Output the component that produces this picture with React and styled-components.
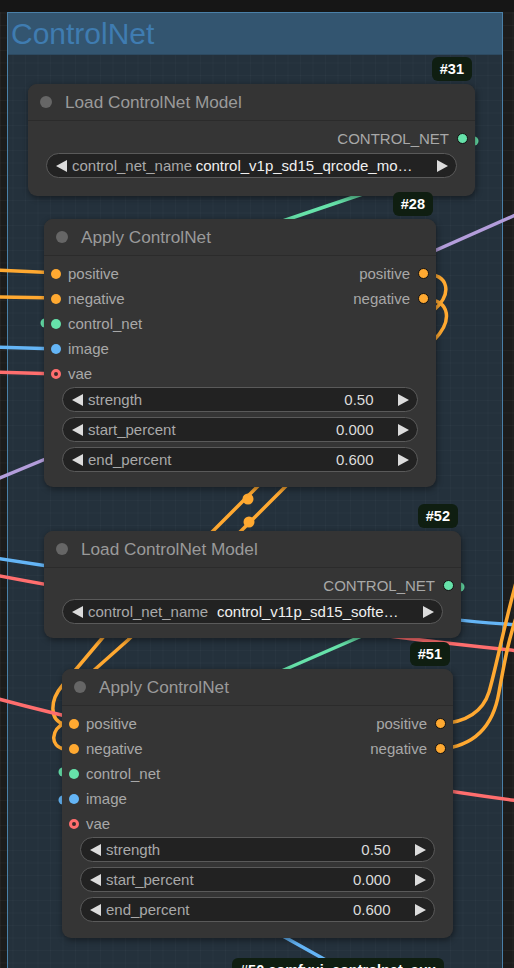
import React from "react";
import styled, { createGlobalStyle } from "styled-components";

const GlobalStyle = createGlobalStyle`
  html, body { margin: 0; padding: 0; background: #1b1b1b; }
  body { font-family: "Liberation Sans", Arial, sans-serif; }
  * { box-sizing: border-box; }
`;

const COLORS = {
  CONDITIONING: "#ffa931",
  CONTROL_NET: "#66e2aa",
  IMAGE: "#64b5f6",
  VAE: "#ff6e6e",
  LATENT: "#b39ddb",
};

const Canvas = styled.div`
  position: relative;
  width: 514px;
  height: 968px;
  overflow: hidden;
  background-color: #1c1c1c;
  background-image: linear-gradient(#161616, #161616),
    linear-gradient(rgba(255, 255, 255, 0.03) 1px, transparent 1px),
    linear-gradient(90deg, rgba(255, 255, 255, 0.03) 1px, transparent 1px);
  background-size: 100% 12px, 12.5px 12.5px, 12.5px 12.5px;
  background-repeat: no-repeat, repeat, repeat;
`;

const Group = styled.section`
  position: absolute;
  left: 7px;
  top: 12px;
  width: 496px;
  height: 1000px;
  border: 1px solid #4a80a8;
  background: rgba(51, 85, 112, 0.38);
`;

const GroupTitle = styled.h1`
  margin: 0;
  height: 42px;
  padding-left: 3px;
  background: #335570;
  border-bottom: 1px solid #2d4a61;
  color: #3f7cb1;
  font-family: "Liberation Sans", Arial, sans-serif;
  font-weight: 400;
  font-size: 30px;
  line-height: 41px;
`;

const Wires = styled.svg`
  position: absolute;
  left: 0;
  top: 0;
  width: 514px;
  height: 968px;
`;

const NodeBox = styled.div`
  position: absolute;
  background: #353535;
  border-radius: 9px;
  box-shadow: 1px 2px 6px rgba(0, 0, 0, 0.45);
  font-family: "Liberation Sans", Arial, sans-serif;
`;

const TitleBar = styled.div`
  height: 37px;
  display: flex;
  align-items: center;
  gap: 13px;
  padding-left: 12px;
  border-bottom: 1px solid #2b2b2b;
  border-radius: 9px 9px 0 0;
  background: #343434;
`;

const TitleDot = styled.span`
  width: 12px;
  height: 12px;
  border-radius: 50%;
  background: #666;
  flex: none;
`;

const TitleText = styled.span`
  color: #9a9a9a;
  font-size: 17.2px;
  white-space: nowrap;
`;

const Badge = styled.div`
  position: absolute;
  right: 3px;
  bottom: calc(100% + 3px);
  height: 24px;
  padding: 0 8px;
  border-radius: 6px;
  background: #0f1e11;
  color: #fff;
  font-family: "Liberation Sans", Arial, sans-serif;
  font-weight: 700;
  font-size: 14.5px;
  line-height: 24px;
  white-space: nowrap;
`;

const FreeBadge = styled(Badge)`
  right: auto;
  bottom: auto;
`;

const Body = styled.div`
  padding-top: 5px;
  display: flex;
  flex-direction: column;
`;

const PairRow = styled.div`
  height: 25px;
  display: flex;
  align-items: center;
  justify-content: space-between;
`;

const SlotRow = styled.div`
  height: 25px;
  display: flex;
  align-items: center;
  justify-content: ${(p) => (p.$out ? "flex-end" : "flex-start")};
  gap: ${(p) => (p.$out ? "8px" : "7px")};
  padding: ${(p) => (p.$out ? "0 7px 0 0" : "0 0 0 7px")};
`;

const SlotDot = styled.span`
  width: ${(p) => (p.$out ? "11px" : "10px")};
  height: ${(p) => (p.$out ? "11px" : "10px")};
  border-radius: 50%;
  flex: none;
  background: ${(p) => (p.$hollow ? "#3a2a2a" : p.$color)};
  border: ${(p) =>
    p.$out ? "1px solid #111" : p.$hollow ? `3px solid ${p.$color}` : "none"};
`;

const SlotLabel = styled.span`
  color: #a8a8a8;
  font-size: 15px;
  white-space: nowrap;
`;

const WidgetList = styled.div`
  display: flex;
  flex-direction: column;
  gap: 5px;
  padding: 0 18px;
  margin-top: ${(p) => p.$top}px;
`;

const Widget = styled.div`
  height: 25px;
  display: flex;
  align-items: center;
  padding: 0 8px 0 8.5px;
  border: 1px solid #5a5a5a;
  border-radius: 13px;
  background: #222;
  font-size: 15px;
  overflow: hidden;
`;

const Arrow = styled.span`
  width: 0;
  height: 0;
  flex: none;
  border-top: 6.5px solid transparent;
  border-bottom: 6.5px solid transparent;
  ${(p) =>
    p.$right
      ? "border-left: 11px solid #dcdcdc;"
      : "border-right: 11px solid #dcdcdc;"}
`;

const WLabel = styled.span`
  margin-left: 5.5px;
  color: #a9a9a9;
  white-space: nowrap;
`;

const WValue = styled.span`
  margin-left: auto;
  margin-right: 24.5px;
  color: ${(p) => (p.$combo ? "#f0f0f0" : "#dcdcdc")};
  white-space: nowrap;
  overflow: hidden;
`;

const nodes = [
  {
    id: 31,
    title: "Load ControlNet Model",
    x: 28,
    y: 84,
    w: 447,
    h: 112,
    inputs: [],
    outputs: [{ name: "CONTROL_NET", type: "CONTROL_NET" }],
    widgetTop: 2,
    widgets: [{ label: "control_net_name", value: "control_v1p_sd15_qrcode_mo…", combo: true }],
  },
  {
    id: 28,
    title: "Apply ControlNet",
    x: 44,
    y: 219,
    w: 392,
    h: 268,
    inputs: [
      { name: "positive", type: "CONDITIONING" },
      { name: "negative", type: "CONDITIONING" },
      { name: "control_net", type: "CONTROL_NET" },
      { name: "image", type: "IMAGE" },
      { name: "vae", type: "VAE", optional: true },
    ],
    outputs: [
      { name: "positive", type: "CONDITIONING" },
      { name: "negative", type: "CONDITIONING" },
    ],
    widgetTop: 1,
    widgets: [
      { label: "strength", value: "0.50" },
      { label: "start_percent", value: "0.000" },
      { label: "end_percent", value: "0.600" },
    ],
  },
  {
    id: 52,
    title: "Load ControlNet Model",
    x: 44,
    y: 531,
    w: 417,
    h: 107,
    inputs: [],
    outputs: [{ name: "CONTROL_NET", type: "CONTROL_NET" }],
    widgetTop: 1,
    widgets: [{ label: "control_net_name", value: "control_v11p_sd15_softe…", combo: true }],
  },
  {
    id: 51,
    title: "Apply ControlNet",
    x: 62,
    y: 669,
    w: 391,
    h: 269,
    inputs: [
      { name: "positive", type: "CONDITIONING" },
      { name: "negative", type: "CONDITIONING" },
      { name: "control_net", type: "CONTROL_NET" },
      { name: "image", type: "IMAGE" },
      { name: "vae", type: "VAE", optional: true },
    ],
    outputs: [
      { name: "positive", type: "CONDITIONING" },
      { name: "negative", type: "CONDITIONING" },
    ],
    widgetTop: 1,
    widgets: [
      { label: "strength", value: "0.50" },
      { label: "start_percent", value: "0.000" },
      { label: "end_percent", value: "0.600" },
    ],
  },
];

function SlotPair({ inp, out }) {
  return (
    <PairRow>
      {inp ? (
        <SlotRow>
          <SlotDot $color={COLORS[inp.type]} $hollow={inp.optional} />
          <SlotLabel>{inp.name}</SlotLabel>
        </SlotRow>
      ) : (
        <span />
      )}
      {out ? (
        <SlotRow $out>
          <SlotLabel>{out.name}</SlotLabel>
          <SlotDot $out $color={COLORS[out.type]} />
        </SlotRow>
      ) : (
        <span />
      )}
    </PairRow>
  );
}

function Node({ node }) {
  const rows = Math.max(node.inputs.length, node.outputs.length);
  const rowList = Array.from({ length: rows }, (_, i) => i);
  return (
    <NodeBox style={{ left: node.x, top: node.y, width: node.w, height: node.h }}>
      <Badge>#{node.id}</Badge>
      <TitleBar>
        <TitleDot />
        <TitleText>{node.title}</TitleText>
      </TitleBar>
      <Body>
        {rowList.map((i) => (
          <SlotPair key={i} inp={node.inputs[i]} out={node.outputs[i]} />
        ))}
        <WidgetList $top={node.widgetTop}>
          {node.widgets.map((w) => (
            <Widget key={w.label}>
              <Arrow />
              <WLabel>{w.label}</WLabel>
              <WValue $combo={w.combo}>{w.value}</WValue>
              <Arrow $right />
            </Widget>
          ))}
        </WidgetList>
      </Body>
    </NodeBox>
  );
}

function Links() {
  const o = COLORS.CONDITIONING;
  const w = 3.5;
  return (
    <Wires viewBox="0 0 514 968">
      <g fill="none" strokeWidth={w} strokeLinecap="round">
        <path d="M-5,270 L60,273" stroke={o} />
        <path d="M-5,297 L60,298" stroke={o} />
        <path d="M-5,347 L60,349" stroke={COLORS.IMAGE} />
        <path d="M-5,372 L60,374" stroke={COLORS.VAE} />
        <path d="M-5,480 L60,453" stroke={COLORS.LATENT} />
        <path d="M425,255 Q468,236 520,213" stroke={COLORS.LATENT} />
        <path d="M392,184 L268,226" stroke={COLORS.CONTROL_NET} />
        <path
          d="M424,274 C450,274 452,294 434,310 L268,476 L208,536 L104,636 L62,686 C50,700 49,720 64,724"
          stroke={o}
        />
        <path
          d="M424,299 C452,300 452,322 434,340 L292,480 L234,538 L128,640 L92,672 L66,722 C50,730 50,746 64,749"
          stroke={o}
        />
        <path d="M-5,558 C150,582 400,618 520,625" stroke={COLORS.IMAGE} />
        <path d="M-5,575 C150,605 380,637 520,651" stroke={COLORS.VAE} />
        <path d="M380,628 L270,676" stroke={COLORS.CONTROL_NET} />
        <path d="M-5,698 C150,740 400,786 520,801" stroke={COLORS.VAE} />
        <path d="M440,724 C470,722 484,708 489,692 C496,668 503,630 518,575" stroke={o} />
        <path d="M440,749 C478,746 494,722 499,692 C504,665 508,640 518,612" stroke={o} />
        <path d="M272,930 L340,968" stroke={COLORS.IMAGE} />
      </g>
      <g>
        <circle cx="248" cy="499" r="5.5" fill={o} />
        <circle cx="249" cy="522" r="5.5" fill={o} />
        <circle cx="474" cy="141" r="4.5" fill={COLORS.CONTROL_NET} />
        <circle cx="460" cy="587" r="4.5" fill={COLORS.CONTROL_NET} />
        <circle cx="45" cy="323" r="4.5" fill={COLORS.CONTROL_NET} />
        <circle cx="63" cy="772" r="4.5" fill={COLORS.CONTROL_NET} />
        <circle cx="63" cy="800" r="4.5" fill={COLORS.IMAGE} />
      </g>
    </Wires>
  );
}

export default function App() {
  return (
    <>
      <GlobalStyle />
      <Canvas>
        <Group>
          <GroupTitle>ControlNet</GroupTitle>
        </Group>
        <Links />
        {nodes.map((n) => (
          <Node key={n.id} node={n} />
        ))}
        <FreeBadge style={{ left: 232, top: 958 }}>#50 comfyui_controlnet_aux</FreeBadge>
      </Canvas>
    </>
  );
}
